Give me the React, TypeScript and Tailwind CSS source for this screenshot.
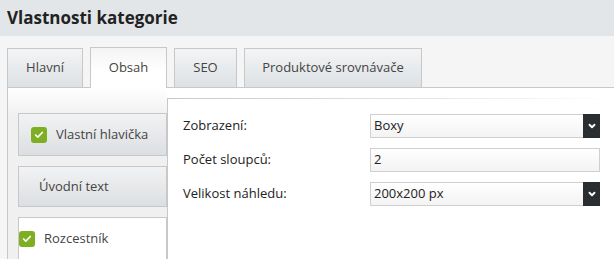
import { ChevronDown, Check } from 'lucide-react';

const tabs = [
  { label: 'Hlavní', width: 'w-[76px]', active: false },
  { label: 'Obsah', width: 'w-[77px]', active: true },
  { label: 'SEO', width: 'w-[63px]', active: false },
  { label: 'Produktové srovnávače', width: 'w-[178px]', active: false },
];

function Checkbox() {
  return (
    <span className="flex h-[16px] w-[16px] shrink-0 items-center justify-center rounded-[3px] bg-[#7eae22]">
      <Check className="h-[10px] w-[10px] text-white" strokeWidth={4} />
    </span>
  );
}

function SelectBox({ value }: { value: string }) {
  return (
    <div className="flex h-[24px] w-[230px] border border-[#cfcfcf] bg-[linear-gradient(to_bottom,#ffffff,#f3f3f3)]">
      <div className="flex flex-1 items-center pl-[3px] text-[13px] text-[#222]">{value}</div>
      <div className="-my-px -mr-px flex w-[17px] items-center justify-center bg-[#2a2e30]">
        <ChevronDown className="h-[10px] w-[10px] text-white" strokeWidth={4.5} />
      </div>
    </div>
  );
}

function TextBox({ value }: { value: string }) {
  return (
    <div className="flex h-[24px] w-[230px] items-center border border-[#cfcfcf] bg-[linear-gradient(to_bottom,#ffffff,#f3f3f3)] pl-[3px] text-[13px] text-[#222]">
      {value}
    </div>
  );
}

export default function App() {
  return (
    <div className="h-[259px] w-[614px] overflow-hidden bg-[#f5f5f5] font-['Open_Sans',sans-serif]">
      <div className="flex h-[36px] items-center bg-[#e3e6e9] px-[7px]">
        <h1 className="text-[17px] font-bold text-[#222]">Vlastnosti kategorie</h1>
      </div>

      <div className="flex items-end gap-[7px] pl-[7px] pt-[11px]">
        {tabs.map((tab) =>
          tab.active ? (
            <div
              key={tab.label}
              className={`relative z-10 -mb-px flex h-[41px] ${tab.width} items-center justify-center border-x border-t border-[#c8c8c8] bg-[linear-gradient(to_bottom,#f4f4f4,#ffffff_60%)] text-[13px] text-[#444]`}
            >
              {tab.label}
            </div>
          ) : (
            <div
              key={tab.label}
              className={`flex h-[39px] ${tab.width} items-center justify-center border-x border-t border-[#c8c8c8] bg-[linear-gradient(to_bottom,#f3f4f5,#dde1e4)] text-[13px] text-[#444]`}
            >
              {tab.label}
            </div>
          )
        )}
      </div>

      <div className="ml-[7px] flex h-[200px] border-l border-t border-[#c8c8c8] bg-white">
        <div className="flex w-[159px] shrink-0 flex-col gap-[10px] bg-[linear-gradient(to_bottom,#ffffff,#f0f0f0_28px)] pl-[10px] pt-[25px]">
          <div className="flex h-[43px] w-[149px] items-center gap-[9px] border border-[#c8c8c8] bg-[linear-gradient(to_bottom,#f1f2f3,#dcdfe2)] pl-[12px] text-[13px] text-[#444]">
            <Checkbox />
            Vlastní hlavička
          </div>
          <div className="flex h-[41px] w-[149px] items-center border border-[#c8c8c8] bg-[linear-gradient(to_bottom,#f1f2f3,#dcdfe2)] pl-[20px] text-[13px] text-[#444]">
            Úvodní text
          </div>
          <div className="flex h-[43px] w-[149px] items-center gap-[9px] border border-[#c8c8c8] bg-white text-[13px] text-[#444]">
            <Checkbox />
            Rozcestník
          </div>
        </div>

        <div className="mt-[10px] flex flex-1 flex-col border-l border-[#c8c8c8] bg-white">
          <div className="h-px bg-[linear-gradient(to_right,#c8c8c8,#e6e6e6_60%,#ffffff)]" />
          <div className="flex flex-col gap-[10px] pl-[15px] pt-[15px] text-[13px] text-[#222]">
            <div className="flex items-center">
              <div className="w-[187px]">Zobrazení:</div>
              <SelectBox value="Boxy" />
            </div>
            <div className="flex items-center">
              <div className="w-[187px]">Počet sloupců:</div>
              <TextBox value="2" />
            </div>
            <div className="flex items-center">
              <div className="w-[187px]">Velikost náhledu:</div>
              <SelectBox value="200x200 px" />
            </div>
          </div>
        </div>
      </div>
    </div>
  );
}
